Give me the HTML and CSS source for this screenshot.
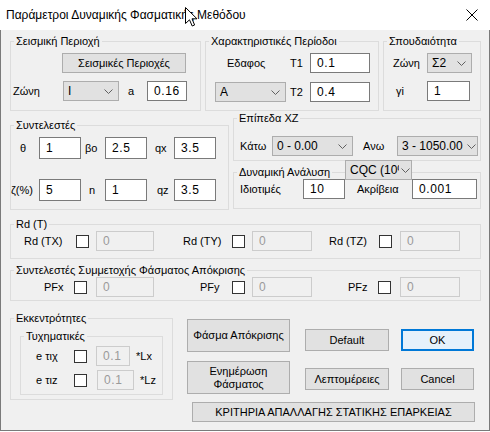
FILE: index.html
```html
<!DOCTYPE html>
<html lang="el">
<head>
<meta charset="utf-8">
<title>Παράμετροι Δυναμικής Φασματικής Μεθόδου</title>
<link rel="stylesheet" href="styles.css">
</head>
<body>
<div class="window">
  <div class="titlebar">
    <span class="title">Παράμετροι Δυναμικής Φασματικής Μεθόδου</span>
    <svg class="close" width="12" height="12" viewBox="0 0 12 12"><path d="M0.5 0.5 L11.5 11.5 M11.5 0.5 L0.5 11.5"/></svg>
  </div>
  <div class="body">
    <div class="row r1">
      <fieldset class="gb gb-seis">
        <legend>Σεισμική Περιοχή</legend>
        <div class="line l-top"><button class="btn btn-seis">Σεισμικές Περιοχές</button></div>
        <div class="line l-zone">
          <span class="lbl lbl-zone">Ζώνη</span>
          <div class="combo w56"><span>I</span><svg class="chev" viewBox="0 0 9 5"><path d="M0.5 0.5 L4.5 4.5 L8.5 0.5"/></svg></div>
          <span class="lbl lbl-a">a</span>
          <div class="edit w40">0.16</div>
        </div>
      </fieldset>
      <fieldset class="gb gb-per">
        <legend>Χαρακτηριστικές Περίοδοι</legend>
        <div class="line l-top">
          <span class="lbl lbl-edaf">Εδαφος</span>
          <span class="lbl lbl-t">T1</span>
          <div class="edit w60">0.1</div>
        </div>
        <div class="line l-t2">
          <div class="combo w71 ml9"><span>A</span><svg class="chev" viewBox="0 0 9 5"><path d="M0.5 0.5 L4.5 4.5 L8.5 0.5"/></svg></div>
          <span class="lbl lbl-t ml4">T2</span>
          <div class="edit w60">0.4</div>
        </div>
      </fieldset>
      <fieldset class="gb gb-imp">
        <legend>Σπουδαιότητα</legend>
        <div class="line l-top">
          <span class="lbl lbl-zone2">Ζώνη</span>
          <div class="combo w45"><span>Σ2</span><svg class="chev" viewBox="0 0 9 5"><path d="M0.5 0.5 L4.5 4.5 L8.5 0.5"/></svg></div>
        </div>
        <div class="line l-zone">
          <span class="lbl lbl-gi">γi</span>
          <div class="edit w43">1</div>
        </div>
      </fieldset>
    </div>

    <div class="row r2">
      <fieldset class="gb gb-coef">
        <legend>Συντελεστές</legend>
        <div class="line l-c1">
          <span class="lbl lbl-th">θ</span>
          <div class="edit tall w42">1</div>
          <span class="lbl lbl-bo">βo</span>
          <div class="edit tall w42">2.5</div>
          <span class="lbl lbl-qx">qx</span>
          <div class="edit tall w42">3.5</div>
        </div>
        <div class="line l-c2">
          <span class="lbl lbl-zeta">ζ(%)</span>
          <div class="edit tall w42">5</div>
          <span class="lbl lbl-n">n</span>
          <div class="edit tall w42">1</div>
          <span class="lbl lbl-qz">qz</span>
          <div class="edit tall w42">3.5</div>
        </div>
      </fieldset>
      <div class="rcol">
        <fieldset class="gb gb-xz">
          <legend>Επίπεδα XZ</legend>
          <div class="line l-xz">
            <span class="lbl lbl-kato">Κάτω</span>
            <div class="combo w81"><span>0 - 0.00</span><svg class="chev" viewBox="0 0 9 5"><path d="M0.5 0.5 L4.5 4.5 L8.5 0.5"/></svg></div>
            <span class="lbl lbl-ano">Ανω</span>
            <div class="combo w81"><span>3 - 1050.00</span><svg class="chev" viewBox="0 0 9 5"><path d="M0.5 0.5 L4.5 4.5 L8.5 0.5"/></svg></div>
          </div>
        </fieldset>
        <fieldset class="gb gb-dyn">
          <legend>Δυναμική Ανάλυση</legend>
          <div class="line">
            <span class="lbl lbl-idio">Ιδιοτιμές</span>
            <div class="edit w42">10</div>
            <span class="lbl lbl-akr">Ακρίβεια</span>
            <div class="edit w65">0.001</div>
          </div>
        </fieldset>
        <div class="combo cqc"><span class="cqc-text">CQC (10%)</span><svg class="chev" viewBox="0 0 9 5"><path d="M0.5 0.5 L4.5 4.5 L8.5 0.5"/></svg></div>
      </div>
    </div>

    <fieldset class="gb gb-rd">
      <legend>Rd (T)</legend>
      <div class="line">
        <span class="lbl lbl-rdx">Rd (TX)</span>
        <span class="chk"></span>
        <div class="edit dis w58 ml7">0</div>
        <span class="lbl lbl-rdy">Rd (TY)</span>
        <span class="chk"></span>
        <div class="edit dis w60 ml7">0</div>
        <span class="lbl lbl-rdz">Rd (TZ)</span>
        <span class="chk"></span>
        <div class="edit dis w60 ml8">0</div>
      </div>
    </fieldset>

    <fieldset class="gb gb-pf">
      <legend>Συντελεστές Συμμετοχής Φάσματος Απόκρισης</legend>
      <div class="line">
        <span class="lbl lbl-pfx">PFx</span>
        <span class="chk"></span>
        <div class="edit dis w58 ml9">0</div>
        <span class="lbl lbl-pfy">PFy</span>
        <span class="chk"></span>
        <div class="edit dis w60 ml7">0</div>
        <span class="lbl lbl-pfz">PFz</span>
        <span class="chk"></span>
        <div class="edit dis w60 ml9">0</div>
      </div>
    </fieldset>

    <div class="row r5">
      <fieldset class="gb gb-ecc">
        <legend>Εκκεντρότητες</legend>
        <fieldset class="gb gb-tyx">
          <legend>Τυχηματικές</legend>
          <div class="line l-e1">
            <span class="lbl lbl-e">e τιχ</span>
            <span class="chk"></span>
            <div class="edit dis w34 ml9">0.1</div>
            <span class="lbl lbl-L">*Lx</span>
          </div>
          <div class="line l-e2">
            <span class="lbl lbl-e">e τιz</span>
            <span class="chk"></span>
            <div class="edit dis w37 ml10">0.1</div>
            <span class="lbl lbl-L2">*Lz</span>
          </div>
        </fieldset>
      </fieldset>
      <div class="btns">
        <div class="bcol bcol1">
          <button class="btn big">Φάσμα Απόκρισης</button>
          <button class="btn big">Ενημέρωση<br>Φάσματος</button>
        </div>
        <div class="bcol bcol2">
          <button class="btn sm">Default</button>
          <button class="btn sm">Λεπτομέρειες</button>
        </div>
        <div class="bcol bcol3">
          <button class="btn sm ok">OK</button>
          <button class="btn sm">Cancel</button>
        </div>
      </div>
    </div>
    <div class="row r6">
      <button class="btn krit">ΚΡΙΤΗΡΙΑ ΑΠΑΛΛΑΓΗΣ ΣΤΑΤΙΚΗΣ ΕΠΑΡΚΕΙΑΣ</button>
    </div>
  </div>
  <svg class="cursor" width="13" height="20" viewBox="0 0 13 20"><path d="M0.5 0.5 L0.5 16.5 L4.5 12.8 L7.2 19 L9.6 18 L7 11.8 L12 11.8 Z"/></svg>
</div>
</body>
</html>
```
FILE: styles.css
```css
* { box-sizing: border-box; }
html, body { margin: 0; padding: 0; }
body {
  width: 490px;
  height: 432px;
  overflow: hidden;
  background: #ffffff;
  font-family: "Liberation Sans", Arial, sans-serif;
  font-size: 11px;
  color: #000;
}
.window {
  position: relative;
  width: 490px;
  height: 431px;
  background: #f0f0f0;
  border: 1px solid #7a7a7a;
  border-top: none;
}
.titlebar {
  height: 30px;
  background: #fff;
  display: flex;
  align-items: center;
  justify-content: space-between;
  padding: 0 12px 0 6px;
  margin: 0 -1px;
}
.title { font-size: 12px; color: #000; }
.close path { stroke: #000; stroke-width: 1; fill: none; }
.cursor { position: absolute; left: 184px; top: 7px; }
.cursor path { fill: #fff; stroke: #000; stroke-width: 1; stroke-linejoin: miter; }

.body { padding: 0 0 0 9px; }
.row { display: flex; align-items: flex-start; }
.r1 { margin-top: 4px; }

.gb {
  margin: 0;
  padding: 0;
  border: 1px solid #dcdcdc;
  min-width: 0;
}
.gb > legend {
  margin-left: 3px;
  padding: 0 2px;
  line-height: 14px;
  height: 14px;
  font-size: 11px;
}
.line { display: flex; align-items: center; }
.lbl { white-space: nowrap; flex: none; }

.combo {
  flex: none;
  height: 20px;
  display: flex;
  align-items: center;
  justify-content: space-between;
  border: 1px solid #adadad;
  background: #e1e1e1;
  padding: 0 5px 0 4px;
  font-size: 12px;
  white-space: nowrap;
  overflow: hidden;
}
.chev { width: 9px; height: 5px; flex: none; margin-left: 4px; }
.chev path { fill: none; stroke: #606060; stroke-width: 1; }

.edit {
  flex: none;
  height: 20px;
  display: flex;
  align-items: center;
  border: 1px solid #7a7a7a;
  background: #fff;
  padding-left: 6px;
  font-size: 12px;
  letter-spacing: 0.6px;
}
.edit.tall { height: 22px; }
.edit.dis { background: #f0f0f0; border-color: #cccccc; color: #9a9a9a; }
.chk {
  flex: none;
  width: 13px;
  height: 13px;
  border: 1px solid #333;
  background: #fff;
}
.btn {
  font-family: "Liberation Sans", Arial, sans-serif;
  font-size: 11px;
  color: #000;
  background: #e1e1e1;
  border: 1px solid #adadad;
  padding: 0;
  margin: 0;
  line-height: 13px;
}

.w34 { width: 34px; } .w37 { width: 37px; } .w40 { width: 40px; } .w42 { width: 42px; }
.w43 { width: 43px; } .w45 { width: 45px; } .w56 { width: 56px; } .w58 { width: 58px; }
.w60 { width: 60px; } .w65 { width: 65px; } .w71 { width: 71px; } .w81 { width: 81px; }
.ml4 { margin-left: 4px; } .ml7 { margin-left: 7px; } .ml8 { margin-left: 8px; }
.ml9 { margin-left: 9px; } .ml10 { margin-left: 10px; }

/* row 1 */
.gb-seis { width: 191px; height: 77px; }
.gb-per { width: 174px; height: 77px; margin-left: 4px; }
.gb-imp { width: 98px; height: 77px; margin-left: 4px; }
.l-top { margin-top: 5px; height: 20px; }
.l-zone { margin-top: 8px; }
.l-t2 { margin-top: 9px; }
.btn-seis { margin-left: 51px; width: 124px; height: 20px; }
.lbl-zone { margin-left: 2px; width: 50px; }
.lbl-a { margin-left: 9px; width: 19px; }
.lbl-edaf { margin-left: 21px; width: 63px; }
.lbl-t { width: 20px; }
.lbl-zone2 { margin-left: 9px; width: 34px; }
.lbl-gi { margin-left: 12px; width: 31px; }

/* row 2 */
.gb-coef { width: 219px; height: 92px; margin-top: 7px; }
.l-c1 { margin-top: 5px; }
.l-c2 { margin-top: 20px; }
.lbl-th { margin-left: 9px; width: 19px; }
.lbl-bo { margin-left: 4px; width: 20px; }
.lbl-qx { margin-left: 8px; width: 19px; }
.lbl-zeta { width: 28px; }
.lbl-n { margin-left: 8px; width: 16px; }
.lbl-qz { margin-left: 10px; width: 17px; }
.rcol { position: relative; width: 248px; margin-left: 4px; display: flex; flex-direction: column; }
.gb-xz { height: 50px; }
.l-xz { margin-top: 11px; }
.lbl-kato { margin-left: 6px; width: 32px; }
.lbl-ano { margin-left: 10px; width: 34px; }
.gb-dyn { height: 44px; margin-top: 4px; }
.lbl-idio { margin-left: 6px; width: 63px; }
.lbl-akr { margin-left: 12px; width: 55px; }
.cqc { position: absolute; left: 112px; top: 49px; width: 67px; padding: 0 3px 0 4px; justify-content: flex-start; }
.cqc-text { display: block; overflow: hidden; width: 49px; flex: none; }
.cqc .chev { margin-left: 2px; }

/* row 3, 4 */
.gb-rd { width: 471px; height: 42px; margin-top: 7px; }
.lbl-rdx { margin-left: 13px; width: 52px; }
.lbl-rdy { margin-left: 29px; width: 49px; }
.lbl-rdz { margin-left: 17px; width: 50px; }
.gb-pf { width: 471px; height: 38px; margin-top: 4px; }
.lbl-pfx { margin-left: 33px; width: 30px; }
.lbl-pfy { margin-left: 46px; width: 32px; }
.lbl-pfz { margin-left: 36px; width: 30px; }

/* row 5 */
.r5 { margin-top: 10px; }
.gb-ecc { width: 163px; height: 89px; }
.gb-tyx { width: 143px; height: 66px; margin: 4px 0 0 9px; }
.l-e1 { margin-top: 3px; }
.l-e2 { margin-top: 4px; }
.lbl-e { margin-left: 15px; width: 38px; }
.lbl-L { margin-left: 6px; }
.lbl-L2 { margin-left: 6px; }
.btns { display: flex; margin: 8px 0 0 14px; }
.bcol { display: flex; flex-direction: column; }
.bcol1 { width: 103px; gap: 9px; }
.bcol2 { width: 84px; gap: 17px; margin: 10px 0 0 15px; }
.bcol3 { width: 73px; gap: 17px; margin: 10px 0 0 12px; }
.btn.big { height: 33px; width: 103px; }
.btn.sm { height: 22px; }
.btn.ok { border: 1px solid #0078d7; box-shadow: inset 0 0 0 1px #0078d7; background: #e5f1fb; }
.r6 { margin-top: 2px; }
.krit { margin-left: 182px; width: 283px; height: 20px; }
```
